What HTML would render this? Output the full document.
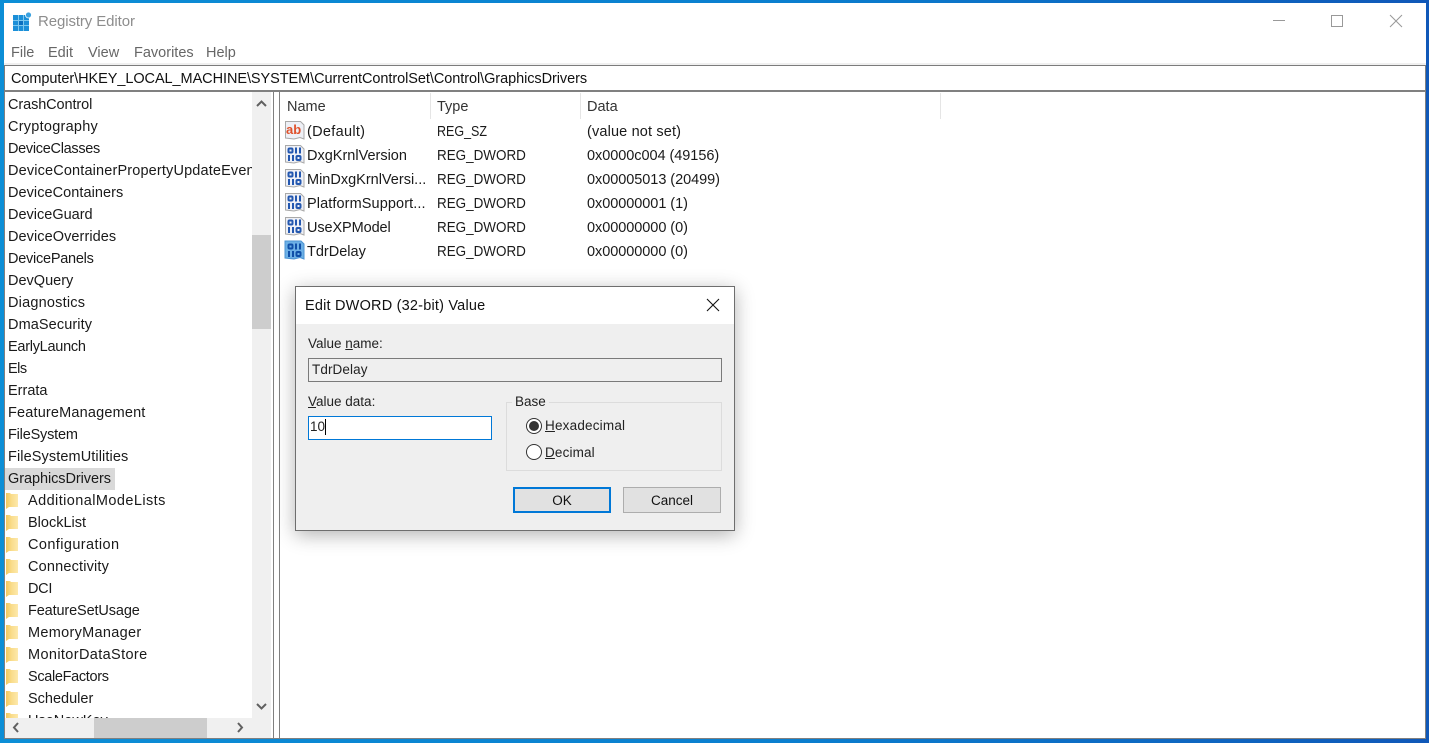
<!DOCTYPE html>
<html><head><meta charset="utf-8"><style>
html,body{margin:0;padding:0;width:1429px;height:743px;overflow:hidden;background:#fff}
body{position:relative;font-family:"Liberation Sans",sans-serif;font-size:14.5px;color:#1a1a1a}
.a{position:absolute}
.t{position:absolute;white-space:nowrap}
.r{position:absolute;left:8px;height:22px;line-height:22px;white-space:nowrap;margin-top:1px}
.c{left:28px}
.v{position:absolute;white-space:nowrap;height:24px;line-height:24px}
.d{transform:scaleX(.927);transform-origin:left center}
.m{position:absolute;top:44px;height:18px;line-height:18px;color:#666;white-space:nowrap}
u{text-decoration:underline}
</style></head><body>
<div class="a" style="left:0;top:0;width:1429px;height:743px;background:linear-gradient(90deg,#0c8ed6 0%,#0a7fcf 55%,#1058b8 100%)"></div>
<div class="a" style="left:4px;top:3px;width:1422px;height:736px;background:#fff"></div>
<svg class="a" style="left:12px;top:11px" width="21" height="22" viewBox="0 0 21 22">
<rect x="1" y="4" width="16" height="16" fill="#1b8fd8"/>
<path d="M1 9.500h16M1 14.500h16M6.500 4v16M11.500 4v16" stroke="#7cc8ef" stroke-width="1"/>
<rect x="7" y="10" width="4" height="4" fill="#0a6fc0"/>
<circle cx="16.500" cy="4" r="3" fill="#3ba2e0" stroke="#fff" stroke-width=".8"/>
</svg>
<div class="t" style="left:38px;top:13px;font-size:15px;line-height:18px;color:#8d8d8d;letter-spacing:-.1px">Registry Editor</div>
<div class="a" style="left:1273px;top:20px;width:12px;height:1px;background:#999"></div>
<div class="a" style="left:1331px;top:15px;width:10px;height:10px;border:1px solid #999"></div>
<svg class="a" style="left:1389px;top:14px" width="14" height="14"><path d="M1 1l12 12M13 1L1 13" stroke="#999" stroke-width="1"/></svg>
<div class="m" style="left:11px">File</div>
<div class="m" style="left:48px">Edit</div>
<div class="m" style="left:88px">View</div>
<div class="m" style="left:134px">Favorites</div>
<div class="m" style="left:206px">Help</div>
<div class="a" style="left:4px;top:63px;width:1422px;height:2px;background:#f0f0f0"></div>
<div class="a" style="left:4px;top:65px;width:1422px;height:1px;background:#7c7c7c"></div>
<div class="a" style="left:4px;top:90px;width:1422px;height:2px;background:#808080"></div>
<div class="a" style="left:4px;top:65px;width:1px;height:26px;background:#7c7c7c"></div>
<div class="t" style="left:11px;top:69px;line-height:20px;color:#111;letter-spacing:-.065px">Computer\HKEY_LOCAL_MACHINE\SYSTEM\CurrentControlSet\Control\GraphicsDrivers</div>

<!-- tree -->
<div class="a" style="left:4px;top:92px;width:1px;height:647px;background:#808080"></div>
<div class="a" style="left:5px;top:468px;width:110px;height:22px;background:#d9d9d9"></div>
<div class="a" style="left:0;top:93px;width:252px;height:625px;overflow:hidden">
<div class="r" style="top:0px;letter-spacing:-.1px">CrashControl</div>
<div class="r" style="top:22px;letter-spacing:.25px">Cryptography</div>
<div class="r" style="top:44px;letter-spacing:-.3px">DeviceClasses</div>
<div class="r" style="top:66px;letter-spacing:.15px">DeviceContainerPropertyUpdateEvents</div>
<div class="r" style="top:88px;letter-spacing:.05px">DeviceContainers</div>
<div class="r" style="top:110px">DeviceGuard</div>
<div class="r" style="top:132px;letter-spacing:.07px">DeviceOverrides</div>
<div class="r" style="top:154px;letter-spacing:-.25px">DevicePanels</div>
<div class="r" style="top:176px">DevQuery</div>
<div class="r" style="top:198px;letter-spacing:.2px">Diagnostics</div>
<div class="r" style="top:220px;letter-spacing:.1px">DmaSecurity</div>
<div class="r" style="top:242px;letter-spacing:-.27px">EarlyLaunch</div>
<div class="r" style="top:264px;letter-spacing:-.5px">Els</div>
<div class="r" style="top:286px">Errata</div>
<div class="r" style="top:308px;letter-spacing:.17px">FeatureManagement</div>
<div class="r" style="top:330px;letter-spacing:-.2px">FileSystem</div>
<div class="r" style="top:352px;letter-spacing:.1px">FileSystemUtilities</div>
<div class="r" style="top:374px;letter-spacing:-.07px">GraphicsDrivers</div>
<div class="r c" style="top:396px;letter-spacing:.42px">AdditionalModeLists</div>
<div class="r c" style="top:418px">BlockList</div>
<div class="r c" style="top:440px;letter-spacing:.4px">Configuration</div>
<div class="r c" style="top:462px;letter-spacing:.17px">Connectivity</div>
<div class="r c" style="top:484px;letter-spacing:-.3px">DCI</div>
<div class="r c" style="top:506px;letter-spacing:-.13px">FeatureSetUsage</div>
<div class="r c" style="top:528px;letter-spacing:.3px">MemoryManager</div>
<div class="r c" style="top:550px;letter-spacing:.37px">MonitorDataStore</div>
<div class="r c" style="top:572px;letter-spacing:-.33px">ScaleFactors</div>
<div class="r c" style="top:594px">Scheduler</div>
<div class="r c" style="top:616px">UseNewKey</div>
<svg class="a" style="left:0;top:0" width="20" height="625">
<defs><linearGradient id="g" x1="0" x2="1" y1="0" y2="0"><stop offset="0" stop-color="#f3c85c"/><stop offset=".45" stop-color="#f9dc8a"/><stop offset="1" stop-color="#fde9ac"/></linearGradient>
<path id="fo" d="M6 0h4l1 1h7v13H9l-3 2z" fill="url(#g)"/></defs>
<use href="#fo" y="400"/><use href="#fo" y="422"/><use href="#fo" y="444"/><use href="#fo" y="466"/><use href="#fo" y="488"/><use href="#fo" y="510"/><use href="#fo" y="532"/><use href="#fo" y="554"/><use href="#fo" y="576"/><use href="#fo" y="598"/><use href="#fo" y="620"/>
</svg>
</div>
<!-- vertical scrollbar -->
<div class="a" style="left:252px;top:92px;width:19px;height:626px;background:#f0f0f0"></div>
<div class="a" style="left:252px;top:235px;width:19px;height:94px;background:#cdcdcd"></div>
<svg class="a" style="left:252px;top:94px" width="19" height="17"><path d="M5 12l4.500-4.500L14 12" fill="none" stroke="#606060" stroke-width="2"/></svg>
<svg class="a" style="left:252px;top:699px" width="19" height="17"><path d="M5 5l4.500 4.500L14 5" fill="none" stroke="#606060" stroke-width="2"/></svg>
<!-- horizontal scrollbar -->
<div class="a" style="left:5px;top:718px;width:266px;height:20px;background:#f0f0f0"></div>
<div class="a" style="left:94px;top:718px;width:113px;height:20px;background:#cdcdcd"></div>
<svg class="a" style="left:7px;top:718px" width="16" height="18"><path d="M11 5L7 9.500l4 4.500" fill="none" stroke="#606060" stroke-width="2"/></svg>
<svg class="a" style="left:233px;top:718px" width="16" height="18"><path d="M5 5l4 4.500L5 14" fill="none" stroke="#606060" stroke-width="2"/></svg>
<div class="a" style="left:273px;top:92px;width:1px;height:647px;background:#808080"></div>
<div class="a" style="left:279px;top:92px;width:1px;height:647px;background:#808080"></div>
<div class="a" style="left:1425px;top:65px;width:1px;height:674px;background:#808080"></div>
<div class="a" style="left:4px;top:738px;width:1422px;height:1px;background:#808080"></div>

<!-- list -->
<div class="t" style="left:287px;top:98px;line-height:18px;color:#333">Name</div>
<div class="t" style="left:437px;top:98px;line-height:18px;color:#333">Type</div>
<div class="t" style="left:587px;top:98px;line-height:18px;color:#333">Data</div>
<div class="a" style="left:430px;top:93px;width:1px;height:26px;background:#e5e5e5"></div>
<div class="a" style="left:580px;top:93px;width:1px;height:26px;background:#e5e5e5"></div>
<div class="a" style="left:940px;top:93px;width:1px;height:26px;background:#e5e5e5"></div>

<svg class="a" style="left:284px;top:120px" width="22" height="144" viewBox="0 0 22 144">
<defs>
<path id="pg" d="M1.500 1.500h15l3.500 3.500v14l-4-1.500-6 1.500-8.500-1z" fill="#eef0f6" stroke="#a9a9a9"/>
<g id="nums" fill="none" stroke-width="2"><rect x="4.500" y="4.500" width="4" height="4" rx="1"/><path d="M12 3.500v6M16 3.500v6M5 11v6M9 11v6"/><rect x="12.500" y="12" width="4" height="4" rx="1"/></g>
<g id="bin"><use href="#pg"/><use href="#nums" stroke="#2458b0"/></g>
</defs>
<use href="#pg"/>
<text x="2" y="14" font-family="Liberation Sans,sans-serif" font-size="13" font-weight="bold" fill="#e0512b">ab</text>
<use href="#bin" y="24"/><use href="#bin" y="48"/><use href="#bin" y="72"/><use href="#bin" y="96"/>
<g transform="translate(0 120)"><path d="M1 1h16l3 3v15l-4-1.500-6 1.500-9-1z" fill="#6cb0e6" stroke="#4b93d2"/><use href="#nums" stroke="#0f4fa8"/></g>
</svg>

<div class="v" style="left:307px;top:120px;letter-spacing:.3px">(Default)</div><div class="v" style="left:437px;top:120px;transform:scaleX(.862);transform-origin:left center">REG_SZ</div><div class="v" style="left:587px;top:120px;letter-spacing:.15px">(value not set)</div>
<div class="v" style="left:307px;top:144px">DxgKrnlVersion</div><div class="v d" style="left:437px;top:144px">REG_DWORD</div><div class="v" style="left:587px;top:144px;letter-spacing:-.05px">0x0000c004 (49156)</div>
<div class="v" style="left:307px;top:168px">MinDxgKrnlVersi...</div><div class="v d" style="left:437px;top:168px">REG_DWORD</div><div class="v" style="left:587px;top:168px;letter-spacing:-.05px">0x00005013 (20499)</div>
<div class="v" style="left:307px;top:192px;letter-spacing:.1px">PlatformSupport...</div><div class="v d" style="left:437px;top:192px">REG_DWORD</div><div class="v" style="left:587px;top:192px;letter-spacing:-.05px">0x00000001 (1)</div>
<div class="v" style="left:307px;top:216px;letter-spacing:-.1px">UseXPModel</div><div class="v d" style="left:437px;top:216px">REG_DWORD</div><div class="v" style="left:587px;top:216px;letter-spacing:-.05px">0x00000000 (0)</div>
<div class="v" style="left:307px;top:240px">TdrDelay</div><div class="v d" style="left:437px;top:240px">REG_DWORD</div><div class="v" style="left:587px;top:240px;letter-spacing:-.05px">0x00000000 (0)</div>

<!-- dialog -->
<div class="a" style="left:295px;top:286px;width:438px;height:243px;background:#efefef;border:1px solid #6e6e6e;box-shadow:0 4px 18px rgba(0,0,0,.3)"></div>
<div class="a" style="left:296px;top:287px;width:438px;height:37px;background:#fff"></div>
<div class="t" style="left:305px;top:297px;line-height:18px;color:#111;letter-spacing:.2px">Edit DWORD (32-bit) Value</div>
<svg class="a" style="left:706px;top:298px" width="14" height="14"><path d="M1 1l12 12M13 1L1 13" stroke="#111" stroke-width="1.100"/></svg>
<div class="t" style="left:308px;top:336px;font-size:13.500px;line-height:16px;color:#222">Value <u>n</u>ame:</div>
<div class="a" style="left:308px;top:358px;width:412px;height:22px;border:1px solid #7a7a7a;background:#efefef"></div>
<div class="t" style="left:312px;top:362px;font-size:13.500px;line-height:16px;color:#222;letter-spacing:.1px">TdrDelay</div>
<div class="t" style="left:308px;top:394px;font-size:13.500px;line-height:16px;color:#222"><u>V</u>alue data:</div>
<div class="a" style="left:308px;top:416px;width:182px;height:22px;border:1px solid #0078d7;background:#fff"></div>
<div class="t" style="left:310px;top:419px;font-size:13.500px;line-height:16px;color:#222">10</div>
<div class="a" style="left:325px;top:419px;width:1px;height:16px;background:#000"></div>
<div class="a" style="left:506px;top:402px;width:214px;height:67px;border:1px solid #dcdcdc"></div>
<div class="t" style="left:512px;top:394px;padding:0 3px;background:#efefef;font-size:13.500px;line-height:16px;color:#222">Base</div>
<svg class="a" style="left:525px;top:417px" width="18" height="18"><circle cx="9" cy="9" r="7.500" fill="#fff" stroke="#333"/><circle cx="9" cy="9" r="5" fill="#333"/></svg>
<svg class="a" style="left:525px;top:443px" width="18" height="18"><circle cx="9" cy="9" r="7.500" fill="#fff" stroke="#333"/></svg>
<div class="t" style="left:545px;top:418px;font-size:13.500px;line-height:16px;color:#222;letter-spacing:.2px"><u>H</u>exadecimal</div>
<div class="t" style="left:545px;top:445px;font-size:13.500px;line-height:16px;color:#222;letter-spacing:.15px"><u>D</u>ecimal</div>
<div class="a" style="left:513px;top:487px;width:94px;height:22px;border:2px solid #0078d7;background:#e1e1e1;text-align:center;line-height:24px;font-size:13.500px;color:#111">OK</div>
<div class="a" style="left:623px;top:487px;width:96px;height:24px;border:1px solid #adadad;background:#e1e1e1;text-align:center;line-height:25px;font-size:13.500px;color:#111">Cancel</div>
</body></html>
